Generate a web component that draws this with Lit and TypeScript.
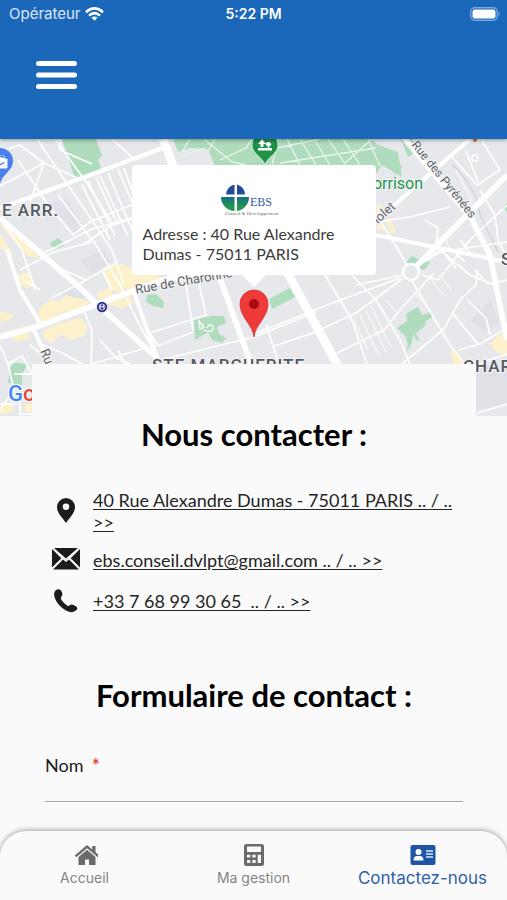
import { LitElement, html, css, svg } from "lit";
import { customElement } from "lit/decorators.js";

/* Street geometry, grouped by line width. */
const minorRoads = [
  "M37 139L112 250L124 285", "M55 139L86 182L112 223", "M0 186L44 163L82 180", "M44 163L30 202", "M18 160L48 205L74 236",
  "M0 152L20 145L44 163", "M112 139L133 158L160 149", "M100 176L128 236", "M82 185L110 240", "M88 181L115 236", "M96 177L117 223",
  "M108 173L133 232", "M118 169L132 202", "M124 168L132 190", "M74 234L90 222L132 205", "M84 244L110 226L132 219",
  "M58 195L98 248L120 285L133 312L158 360", "M40 255L92 229L132 218", "M20 270L54 252L96 241", "M22 279L40 290", "M52 298L86 280L118 262",
  "M43 345L60 352L82 364", "M84 311L92 330L91 364", "M92 364L142 349", "M30 345L42 354", "M0 345L8 364L14 390L0 410",
  "M8 364L22 356L32 374", "M14 374L32 374", "M20 395V416M20 414H32M0 404H20", "M184 272L193 330", "M196 270L206 315L150 333",
  "M150 333L158 346L193 332", "M160 360L254 337L316 312", "M254 334L330 304L400 278", "M274 346L313 333L356 313L390 288L402 279",
  "M266 325L278 361", "M322 270L352 320L367 364", "M347 270L376 300L400 340L410 364", "M337 353L357 343L384 330L400 310L434 273",
  "M412 281L450 345L464 364", "M402 364L444 329L460 300L476 285L477 270", "M453 314L478 344", "M467 300L486 318L490 335", "M459 350L480 344L507 328",
  "M381 222L403 258L411 272", "M356 285L403 275L440 252L507 242", "M377 222L410 217L450 207", "M425 220L438 228L436 245",
  "M422 275L438 280L470 240L507 205", "M419 265L440 250L470 275L494 285", "M452 157L477 185L500 170L482 141", "M466 151L478 182", "M480 190L495 215L498 240L507 258",
  "M475 270L488 284L507 280", "M450 248L465 262M460 240L475 258M446 256L456 268", "M477 364L507 354", "M477 413L507 404",
  "M60 139V150L92 164", "M4 224L22 250L35 290", "M100 340L116 358L130 364", "M118 350L125 364", "M64 270L86 280M102 270L112 290",
];
const thinRoads = [
  "M360 315L376 350M366 310L386 352M371 306L390 346M354 320L368 350", "M414 292L428 308M430 278L444 295M438 274L452 290",
  "M386 300L396 312M376 348L380 356", "M456 170L472 200", "M450 250L446 240M462 255L468 246",
];
const mainRoads = [
  "M0 208L17 202L163 148", "M7 250L20 290L40 323", "M33 328L44 352", "M133 290L158 360", "M377 223L400 200L440 165L470 139",
  "M376 235L507 262",
];
const avenues = [
  "M0 218L77 285L100 307L157 358", "M0 337L33 328L130 292L170 278L240 264", "M217 270L251 364", "M404 138L471 218L490 255L507 340",
  "M507 175L437 245L405 278",
];

const parks = [
  "M62 139L75 179L92 175L101 168L98 160L102 156L96 139Z", "M173 139L178 152L190 148L208 149L215 166L376 174L382 165L402 177L398 152L378 145L372 139Z",
  "M401 139L408 157L416 152L412 139Z", "M388 166L396 175L402 167L396 162Z", "M50 243L58 238L62 241L64 245L58 248L52 247Z",
  "M147 295L156 294L164 302L163 308L153 306L146 302Z", "M194 320L207 317L212 316L224 316L226 323L217 327L219 334L226 338L222 343L212 340L208 332L195 340Z",
  "M269 299L290 288L295 297L272 309Z", "M397 328L407 321L406 314L418 307L422 315L431 312L434 316L426 321L425 326L416 333L420 342L416 340L413 334L412 343L406 352L408 344L405 336Z",
  "M405 263L412 256L420 260L416 266L410 264Z", "M420 263L426 260L430 263L424 270L420 268Z", "M10 368L14 363L28 364L22 374V385L8 383Z", "M503 207L507 203V212Z",
];
const blocks = [
  "M0 225L7 222L34 245L44 250L38 258L28 256L13 240Z", "M0 233L10 250L14 256L6 252L0 246Z", "M104 268L120 264L132 268L165 278L186 272L220 276L180 280L132 290L122 288L106 280Z",
  "M110 280L126 275L128 287L118 292L108 290Z", "M97 293L108 288L116 297L128 292L134 304L122 308L112 305L100 302Z", "M38 310L50 300L58 302L66 295L90 302L78 310L64 312L52 318L40 322Z",
  "M44 330L58 324L80 318L88 326L84 336L70 340L60 334L52 344L44 338Z", "M0 312L14 314L10 320L0 322Z", "M14 276L28 272L36 285L26 288L18 284Z", "M4 332L24 326L30 338L18 342Z",
  "M450 352L458 350L464 364H454Z", "M490 344L500 334L507 332V356L496 352Z", "M377 205L382 204L378 218L376 218Z", "M386 219L390 218L396 232L390 234Z", "M377 230L386 231L384 226L377 224Z",
  "M0 406L12 403L14 412L0 414Z", "M24 404H32V412H26Z",
];
const parkPaths = "M178 157L205 148M190 139L182 152M204 139L232 162L246 165M215 139L208 152M220 160L246 148L252 139M278 139L272 165M287 139L300 165M300 139L316 165M314 139L330 165M268 150L320 139M280 163L376 148M328 139L346 165M343 139L360 165M345 163L372 139M368 139L380 166";

const street = (d: string) => svg`<path d=${d} />`;

function mapDrawing() {
  return html`
    <svg class="map-art" viewBox="0 139 507 277" preserveAspectRatio="xMidYMid slice" role="img" aria-label="Plan du quartier">
      <rect y="139" width="507" height="277" fill="#e6e8ec" />
      <g fill="#dfe1e6">
        <path d="M50 205L66 198L84 228L74 232ZM80 260L104 250L110 262L92 274ZM60 290L78 288L86 298L64 298ZM470 320L490 300L500 322L484 332ZM476 366H507V404L476 410ZM340 185L350 180L370 200L350 210Z" />
      </g>
      <g fill="#fcf1cb">${blocks.map(street)}</g>
      <g fill="#afdcbc">${parks.map(street)}</g>
      <path d=${parkPaths} fill="none" stroke="#e9f5ec" stroke-width="1.3" />
      <path d="M199 321L204 327L200 329ZM203 330Q214 334 213 327Q210 322 207 328" fill="none" stroke="#fff" stroke-width="1.3" />
      <path d="M452 164Q478 190 480 215L498 252" fill="none" stroke="#cfd2d6" stroke-width="1.2" />
      <g fill="none" stroke="#fff" stroke-linejoin="round">
        <g stroke-width="1">${thinRoads.map(street)}</g>
        <g stroke-width="1.7">${minorRoads.map(street)}</g>
        <g stroke-width="4">${mainRoads.map(street)}</g>
        <g stroke-width="5.6">${avenues.map(street)}</g>
        <path d="M163 139L174 168M286 270L338 366" stroke-width="8.5" />
        <circle cx="411" cy="272" r="8" fill="#e6e8ec" stroke-width="2.4" />
        <circle cx="475" cy="158" r="3" fill="#e6e8ec" stroke-width="1.6" />
      </g>
      <circle cx="475" cy="140" r="2" fill="#c5703b" />

      <g class="label">
        <text class="district" x="2" y="216">E ARR.</text>
        <text class="district" x="152" y="371">STE MARGUERITE</text>
        <text class="district" x="463" y="372">CHAR</text>
        <text class="district" x="501" y="265">S</text>
        <text class="street" transform="translate(136 294) rotate(-10)">Rue de Charonne</text>
        <text class="street small" transform="translate(411 145) rotate(51)">Rue des Pyrénées</text>
        <text class="street" transform="translate(358 242) rotate(-42)">Bagnolet</text>
        <text class="street" transform="translate(40 351) rotate(68)">Rue</text>
        <text class="park" x="359" y="189">Morrison</text>
      </g>

      <g>
        <circle cx="102" cy="307" r="5.2" fill="#2f3590" />
        <circle cx="102" cy="307" r="3" fill="none" stroke="#fff" stroke-width=".7" />
        <path d="M100.500 308.500V305.500L102 307.200L103.500 305.500V308.500" fill="none" stroke="#fff" stroke-width=".9" />
      </g>
      <g>
        <path d="M265 165C263 157 252 154 252 145A13 13 0 0 1 278 145C278 154 267 157 265 165Z" fill="#1e9347" stroke="#fff" stroke-width=".6" />
        <path d="M258 148H272V150.500H258ZM262 139L266 144H263.500V147H260.500V144H258ZM268 142C272 142 272 146 269.300 146V148H267.800V146C265 146 265 142 268 142Z" fill="#fff" />
      </g>
      <g>
        <path d="M0 184C2 174 13 171 13 161A13 13 0 0 0 -13 161C-13 171 -2 174 0 184Z" fill="#4a80ea" />
        <path d="M-6 159H7V168H-6ZM-3 159V156H4V159" fill="#fff" stroke="#fff" />
        <path d="M-3 162Q1 167 4 162M-2 158V156.500H3V158" fill="none" stroke="#4a80ea" stroke-width="1.4" />
      </g>

      <text class="brand" x="8" y="401"><tspan fill="#4285f4">G</tspan><tspan fill="#ea4335">o</tspan></text>
    </svg>
  `;
}

@customElement("status-bar")
class StatusBar extends LitElement {
  static styles = css`
    :host {
      display: grid;
      grid-template-columns: 1fr auto 1fr;
      align-items: center;
      height: 28px;
      padding: 0 6px;
      color: #fff;
      font: 15px/28px Inter, "Liberation Sans", sans-serif;
    }
    .carrier { display: flex; align-items: center; gap: 4px; padding-left: 3px; color: #dbe8f8; }
    .time { font-weight: 600; font-size: 14px; }
    .battery { justify-self: end; }
    svg { display: block; }
  `;
  render() {
    return html`
      <span class="carrier">Opérateur
        <svg width="19" height="14" viewBox="0 0 19 14" aria-hidden="true">
          <g fill="none" stroke="#fff" stroke-width="2.500">
            <path d="M1 5.200Q9.500 -2.400 18 5.200" />
            <path d="M4 8.600Q9.500 3.600 15 8.600" />
          </g>
          <path d="M6.500 10.600Q9.500 8.200 12.500 10.600L9.500 13.800Z" fill="#fff" />
        </svg>
      </span>
      <span class="time">5:22 PM</span>
      <svg class="battery" width="31" height="14" viewBox="0 0 31 14" aria-label="Batterie">
        <rect x=".7" y=".7" width="26.600" height="12.600" rx="4" fill="none" stroke="#79a6dc" stroke-width="1.400" />
        <rect x="2.500" y="2.500" width="23" height="9" rx="2.300" fill="#fff" />
        <path d="M28.700 4.800Q31 7 28.700 9.200Z" fill="#79a6dc" />
      </svg>
    `;
  }
}

@customElement("office-map")
class OfficeMap extends LitElement {
  static styles = css`
    :host { display: block; position: relative; height: 277px; overflow: hidden; }
    .map-art { display: block; width: 100%; height: 100%; }
    .label { font-family: Roboto, "Liberation Sans", sans-serif; fill: #5f6368; stroke: #f3f4f6; stroke-width: 2px; paint-order: stroke; }
    .district { font-size: 17px; font-weight: 500; letter-spacing: 1px; fill: #55595e; }
    .street { font-size: 13px; }
    .small { font-size: 12px; }
    .park { font-size: 16px; fill: #26934c; }
    .brand { font: 500 22px Roboto, "Liberation Sans", sans-serif; stroke: #fff; stroke-width: 2px; paint-order: stroke; }
    .callout {
      position: absolute;
      top: 26px;
      left: 50%;
      transform: translateX(-50%);
      box-sizing: border-box;
      width: 244px;
      height: 110px;
      padding: 19px 11px 0;
      border-radius: 4px;
      background: #fff;
      color: #3c3c3c;
      font: 16px/20px Lato, "Liberation Sans", sans-serif;
    }
    .callout::after {
      content: "";
      position: absolute;
      top: 100%;
      left: 50%;
      margin-left: -12px;
      border: 12px solid transparent;
      border-top-color: #fff;
      border-bottom-width: 0;
    }
    .logo { display: block; margin: 0 auto; }
    .logo-name { font: 12px "Liberation Serif", serif; fill: #3558a5; }
    .logo-tag { font: 5px "Liberation Serif", serif; fill: #666; }
    .address { margin: 7px 0 0; }
    .pin { position: absolute; top: 150px; left: 50%; margin-left: -15px; }
  `;
  render() {
    return html`
      ${mapDrawing()}
      <div class="callout">
        <svg class="logo" width="66" height="33" viewBox="0 0 66 33" role="img" aria-label="EBS">
          <defs>
            <linearGradient id="globe" x1="0" y1="0" x2="0" y2="1">
              <stop offset=".3" stop-color="#254a9c" />
              <stop offset=".55" stop-color="#17777f" />
              <stop offset=".85" stop-color="#23974a" />
            </linearGradient>
          </defs>
          <path d="M5 10.500A11 11 0 0 1 13.500 .500V10.500ZM16 .500A11 11 0 0 1 24 10.500H16ZM0 13H13.500V27A14 14 0 0 1 0 13ZM16 13H28A14 14 0 0 1 16 27Z" fill="url(#globe)" />
          <text class="logo-name" x="29" y="22">EBS</text>
          <text class="logo-tag" x="4" y="31">Conseil &amp; Développement</text>
        </svg>
        <p class="address">Adresse : 40 Rue Alexandre Dumas - 75011 PARIS</p>
      </div>
      <svg class="pin" width="30" height="49" viewBox="0 0 30 49" aria-hidden="true">
        <path d="M15 48C14 36 1 28 1 15A14 14 0 0 1 29 15C29 28 16 36 15 48Z" fill="#ee3a38" stroke="#dc2c2c" stroke-width=".8" />
        <circle cx="15" cy="15" r="5" fill="#a80b10" />
      </svg>
    `;
  }
}

@customElement("tab-bar")
class TabBar extends LitElement {
  static styles = css`
    :host { display: block; }
    .tabs {
      display: grid;
      grid-template-columns: repeat(3, 1fr);
      box-sizing: border-box;
      height: 69px;
      padding-top: 11px;
      border-radius: 26px 26px 0 0;
      background: #fafafa;
      box-shadow: 0 -1px 5px rgba(0, 0, 0, 0.36);
    }
    .tab {
      display: flex;
      flex-direction: column;
      align-items: center;
      gap: 2px;
      color: #858585;
      font: 14px/20px Inter, "Liberation Sans", sans-serif;
      text-decoration: none;
      white-space: nowrap;
    }
    .active { color: #2f5fab; font-size: 17px; }
    svg { display: block; }
  `;
  render() {
    return html`
      <nav class="tabs">
        <a class="tab" href="#accueil">
          <svg width="26" height="24" viewBox="-2 0 26 24" fill="#6b6b6b" aria-hidden="true">
            <path d="M13 3L.700 13.400L2.300 15.200L13 6.200L23.700 15.200L25.300 13.400L21.500 10.200V4H18.200V7.400Z" />
            <path d="M13 7.800L4.500 15V23H11V17.500H15V23H21.500V15Z" />
          </svg>
          Accueil
        </a>
        <a class="tab" href="#gestion">
          <svg width="22" height="24" viewBox="0 0 22 24" aria-hidden="true">
            <path fill="#6b6b6b" fill-rule="evenodd" d="M3.500 2H18.500Q21 2 21 4.500V21.500Q21 24 18.500 24H3.500Q1 24 1 21.500V4.500Q1 2 3.500 2ZM4 4.500V10H18V4.500ZM4 12.700V15.500H7.300V12.700ZM9.400 12.700V15.500H12.600V12.700ZM14.700 12.700V21H18V12.700ZM4 18V21H7.300V18ZM9.400 18V21H12.600V18Z" />
          </svg>
          Ma gestion
        </a>
        <a class="tab active" href="#contact" aria-current="page">
          <svg width="26" height="24" viewBox="0 0 26 24" aria-hidden="true">
            <rect x=".500" y="3" width="25" height="20" rx="2" fill="#1f55a5" />
            <circle cx="8.500" cy="10" r="3" fill="#fff" />
            <path d="M3.500 18.500Q3.500 14 7 14H10Q13.500 14 13.500 18.500Z" fill="#fff" />
            <path d="M16 9H23M16 12H23M16 15H23" stroke="#dce7f7" stroke-width="1.500" />
          </svg>
          Contactez-nous
        </a>
      </nav>
    `;
  }
}

@customElement("app-root")
class AppRoot extends LitElement {
  static styles = css`
    :host {
      display: flex;
      flex-direction: column;
      min-height: 100vh;
      background: #fafafa;
      color: #1c1c1c;
      font-family: Lato, "Liberation Sans", sans-serif;
    }
    .top {
      position: relative;
      z-index: 1;
      background: #1b67b9;
      box-shadow: 0 1px 4px rgba(0, 0, 0, 0.4);
    }
    .toolbar { display: flex; align-items: center; box-sizing: border-box; height: 111px; padding: 0 36px 17px; }
    .menu { padding: 0; border: 0; background: none; cursor: pointer; }
    .menu svg { display: block; }
    .content { flex: 1; }
    .panel { position: relative; margin: -52px 31px 0 32px; padding: 50px 13px 0; background: #fafafa; }
    .title { margin: 0; color: #000; font-size: 31px; line-height: 40px; font-weight: 700; text-align: center; }
    .contacts { display: flex; flex-direction: column; gap: 13px; margin: 35px 0 0; padding: 0; list-style: none; }
    .contact { display: flex; align-items: center; gap: 12px; padding-left: 6px; }
    .contact svg { flex: none; display: block; }
    .contact a { color: #242424; font-size: 18px; line-height: 22px; text-decoration: underline; text-underline-offset: 2px; }
    .form { display: flex; flex-direction: column; margin-top: 60px; }
    .field-label { margin-top: 38px; font-size: 18px; line-height: 24px; }
    .required { margin-left: 4px; color: #ee4030; font-weight: 700; }
    .field {
      height: 24px;
      padding: 0;
      border: 0;
      border-bottom: 1px solid #a6a6a6;
      border-radius: 0;
      outline: 0;
      background: none;
      color: inherit;
      font: inherit;
    }
    .dock { position: sticky; bottom: 0; }
  `;
  render() {
    return html`
      <header class="top">
        <status-bar></status-bar>
        <div class="toolbar">
          <button class="menu" type="button" aria-label="Menu">
            <svg width="42" height="30" viewBox="0 0 42 30" stroke="#fff" stroke-width="5" stroke-linecap="round">
              <path d="M2.500 3.500H38.500M2.500 15H38.500M2.500 26.500H38.500" />
            </svg>
          </button>
        </div>
      </header>
      <main class="content">
        <office-map></office-map>
        <div class="panel">
          <h1 class="title">Nous contacter :</h1>
          <ul class="contacts">
            <li class="contact">
              <svg width="30" height="28" viewBox="0 0 30 28" aria-hidden="true">
                <path fill="#1c1c1c" fill-rule="evenodd" d="M15 1A9 9 0 0 0 6 10C6 16 11 20 15 26C19 20 24 16 24 10A9 9 0 0 0 15 1ZM15 6.500A3.300 3.300 0 0 1 15 13.100A3.300 3.300 0 0 1 15 6.500Z" />
              </svg>
              <a href="#plan">40 Rue Alexandre Dumas - 75011 PARIS .. / .. &gt;&gt;</a>
            </li>
            <li class="contact">
              <svg width="30" height="28" viewBox="0 -2 30 28" aria-hidden="true">
                <path fill="#1c1c1c" d="M3 0H27L15 10.500ZM1 1L10.300 10.300L1 19.500ZM29 1V19.500L19.700 10.300ZM12 11.500L15 14L18 11.500L28 21.500H2Z" />
              </svg>
              <a href="mailto:ebs.conseil.dvlpt@gmail.com">ebs.conseil.dvlpt@gmail.com .. / .. &gt;&gt;</a>
            </li>
            <li class="contact">
              <svg width="30" height="28" viewBox="0 -2 30 28" aria-hidden="true">
                <path fill="#1c1c1c" d="M4.500 1.500Q7.500 -1 10 1.500Q12.500 5 10.500 7.500Q9 9 10.500 11Q13 14.500 16 16.500Q17.500 17.500 19 16Q21 14.500 24.500 17Q27.500 19 25.500 21Q21.500 25 15 21.500Q7 17 4 9.500Q2 4 4.500 1.500Z" />
              </svg>
              <a href="tel:+33768993065">+33 7 68 99 30 65&nbsp; .. / .. &gt;&gt;</a>
            </li>
          </ul>
          <form class="form">
            <h2 class="title">Formulaire de contact :</h2>
            <label class="field-label" for="nom">Nom <span class="required">*</span></label>
            <input class="field" id="nom" name="nom" type="text" required />
          </form>
        </div>
      </main>
      <tab-bar class="dock"></tab-bar>
    `;
  }
}
